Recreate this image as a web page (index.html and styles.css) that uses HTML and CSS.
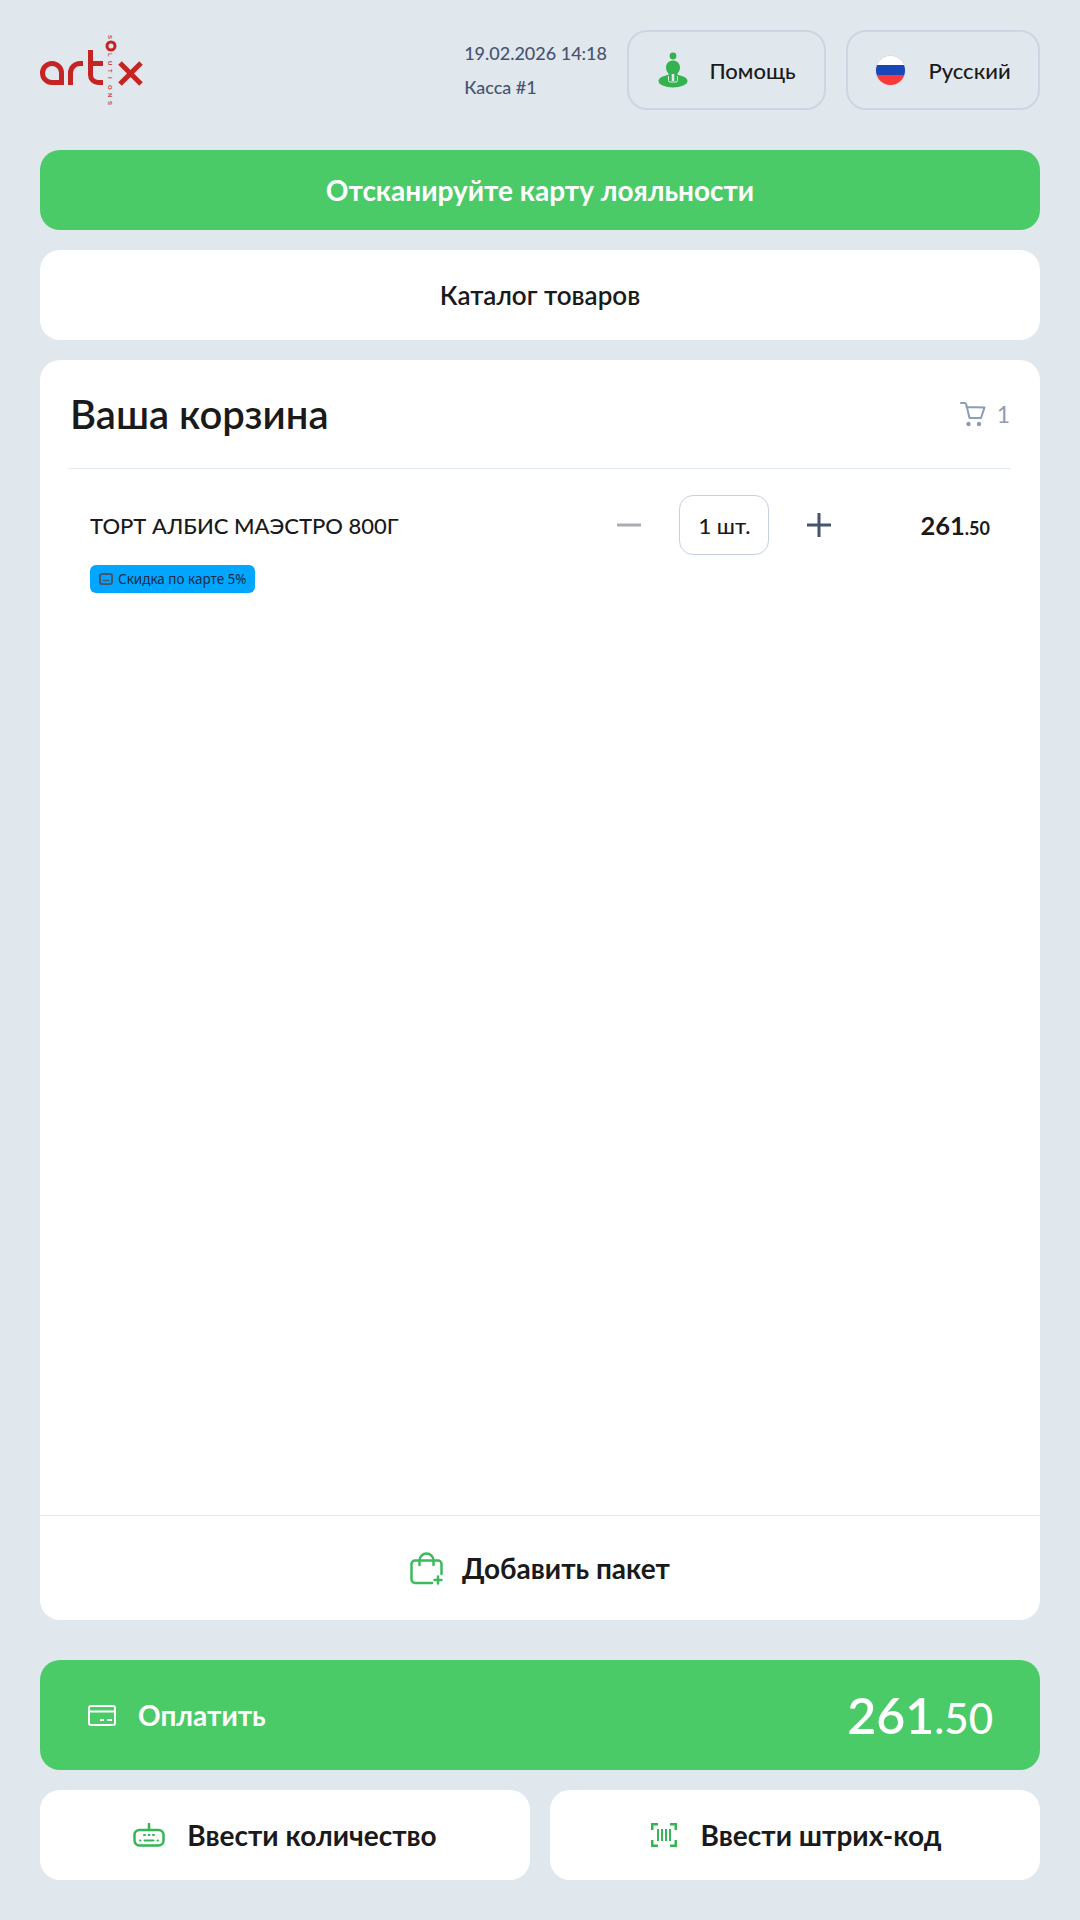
FILE: index.html
```html
<!DOCTYPE html>
<html lang="ru">
<head>
    <meta charset="UTF-8">
    <meta name="viewport" content="width=device-width, initial-scale=1.0">
    <title>Касса</title>
    <link rel="stylesheet" href="styles.css">
</head>
<body>
    <div class="page">
        <header class="header">
            <svg class="logo" viewBox="0 0 104 72" fill="none" stroke="#c42424" stroke-width="5">
                <path d="M21.5 47.5H12A9.5 9.5 0 0 1 12 28.5A9.5 9.5 0 0 1 21.5 38V50"/>
                <path d="M30.5 50V38A9.5 9.5 0 0 1 40 28.5H43"/>
                <path d="M50.5 15V40A7.500 7.500 0 0 0 58 47.500H63M50.500 28.500H63"/>
                <path d="M80 28L101 49M101 28L80 49"/>
                <circle cx="71" cy="11" r="4" stroke-width="3"/>
                <g class="logo-text">
                    <text transform="translate(68 0) rotate(90)">S</text>
                    <text transform="translate(68 18) rotate(90)" x="0 8 16 24 32 40 48">LUTIONS</text>
                </g>
            </svg>
            <div class="info">
                <div>19.02.2026 14:18</div>
                <div>Касса #1</div>
            </div>
            <button class="head-btn help-btn">
                <svg class="head-icon" viewBox="0 0 32 36">
                    <circle cx="16" cy="4" r="3.400" fill="#34b24f"/>
                    <ellipse cx="16" cy="29" rx="14.500" ry="6.500" fill="#34b24f"/>
                    <path d="M16 8.500c-4 0-7 3-7 7 0 2.500 1 4.500 2.500 6V30h9V21.500c1.500-1.500 2.500-3.500 2.500-6 0-4-3-7-7-7z" fill="#34b24f"/>
                    <path d="M14.700 22v7h2.600v-7z" fill="#e0e7ed"/>
                    <path d="M11.500 24v4.500a1.500 1.500 0 0 0 1.500 1.500h6a1.500 1.500 0 0 0 1.500-1.500V24" fill="none" stroke="#e0e7ed" stroke-width="1"/>
                </svg>
                <span>Помощь</span>
            </button>
            <button class="head-btn lang-btn">
                <span class="flag"><i class="flag-white"></i><i class="flag-blue"></i><i class="flag-red"></i></span>
                <span>Русский</span>
            </button>
        </header>

        <div class="scan-card">Отсканируйте карту лояльности</div>
        <div class="catalog-card">Каталог товаров</div>

        <section class="cart">
            <div class="cart-head">
                <h1>Ваша корзина</h1>
                <div class="cart-count">
                    <svg class="cart-icon" viewBox="0 0 26 25" fill="none" stroke="#8d9cb8" stroke-width="2" stroke-linecap="round" stroke-linejoin="round">
                        <path d="M1 1h3.500c1 0 1.500.5 1.800 1.500L9.500 16h11.500l3.500-10.500-18-.5"/>
                        <circle cx="8.500" cy="22" r="1.200" fill="#8d9cb8"/>
                        <circle cx="19" cy="22" r="1.200" fill="#8d9cb8"/>
                    </svg>
                    <span>1</span>
                </div>
            </div>
            <div class="cart-items">
                <div class="item">
                    <div class="item-row">
                        <div class="item-name">ТОРТ АЛБИС МАЭСТРО 800Г</div>
                        <div class="qty">
                            <svg class="qty-btn" viewBox="0 0 24 24"><path d="M0 12h24" stroke="#a9adb3" stroke-width="3"/></svg>
                            <div class="qty-box">1 шт.</div>
                            <svg class="qty-btn" viewBox="0 0 24 24"><path d="M0 12h24M12 0v24" stroke="#47546f" stroke-width="3"/></svg>
                        </div>
                        <div class="item-price">261<small>.50</small></div>
                    </div>
                    <div class="tag">
                        <svg class="tag-icon" viewBox="0 0 14 12" fill="none" stroke="#47546f">
                            <rect x="1" y="1" width="12" height="10" rx="2" stroke-width="2"/>
                            <path d="M3.500 7.500h7" stroke-width="1.500"/>
                        </svg>
                        <span>Скидка по карте 5%</span>
                    </div>
                </div>
            </div>
            <div class="cart-foot">
                <svg class="bag-icon" viewBox="0 0 33 33" fill="none" stroke="#3cba5c" stroke-width="2.500" stroke-linecap="round" stroke-linejoin="round">
                    <path d="M22 31H5a3.500 3.500 0 0 1-3.500-3.500V12A3.500 3.500 0 0 1 5 8.500h23a3.500 3.500 0 0 1 3.500 3.500v10"/>
                    <path d="M9.500 13V8.500a7 7 0 0 1 14 0V13"/>
                    <path d="M28 24.500v7M24.500 28h7"/>
                </svg>
                <span>Добавить пакет</span>
            </div>
        </section>

        <div class="pay-btn">
            <div class="pay-label">
                <svg class="pay-icon" viewBox="0 0 28 21" fill="none" stroke="#fff" stroke-width="2">
                    <rect x="1" y="1" width="26" height="19" rx="2"/>
                    <path d="M1 6.500h26M12 15h4M19 15h5"/>
                </svg>
                <span>Оплатить</span>
            </div>
            <div class="pay-sum">261<small>.50</small></div>
        </div>

        <div class="bottom-row">
            <div class="bottom-btn">
                <svg class="keys-icon" viewBox="0 0 32 24" fill="none" stroke="#34b654" stroke-width="2.500" stroke-linecap="round">
                    <rect x="1.500" y="7" width="29" height="15.500" rx="5"/>
                    <path d="M16 1v6" stroke-width="2.500"/>
                    <path d="M11 12h1M15.500 12h1M20 12h1M7 17.500h.5M11.500 17.500h9M24.500 17.500h.5" stroke-width="2"/>
                </svg>
                <span>Ввести количество</span>
            </div>
            <div class="bottom-btn">
                <svg class="code-icon" viewBox="0 0 26 24" fill="none" stroke="#34b654" stroke-width="2.500">
                    <path d="M7 1.250H1.250V7M19 1.250h5.750V7M7 22.750H1.250V17M19 22.750h5.750V17"/>
                    <path d="M7 6v12M11 6v12M15 6v12M19 6v12" stroke-width="2"/>
                </svg>
                <span>Ввести штрих-код</span>
            </div>
        </div>
    </div>
</body>
</html>
```

FILE: styles.css
```css
* {
    box-sizing: border-box;
}

body {
    font-family: Lato, "Noto Sans", sans-serif;
    background-color: #e0e7ed;
    color: #1a1a1a;
    margin: 0;
    padding: 0;
}

.page {
    display: flex;
    flex-direction: column;
    height: 1920px;
    padding: 30px 40px 40px;
}

.header {
    display: flex;
    align-items: center;
    height: 80px;
    margin-bottom: 40px;
}

.logo {
    width: 104px;
    height: 72px;
    margin-right: auto;
    align-self: flex-start;
    margin-top: 5px;
}

.logo-text {
    font-family: "Liberation Sans", sans-serif;
    font-size: 6px;
    font-weight: 700;
    fill: #c9474d;
    stroke: none;
}

.info {
    display: flex;
    flex-direction: column;
    gap: 12px;
    font-size: 18px;
    font-weight: 500;
    color: #47546f;
    margin-right: 20px;
}

.head-btn {
    display: flex;
    align-items: center;
    justify-content: center;
    height: 80px;
    background: none;
    border: 2px solid #ccd6e2;
    border-radius: 20px;
    font-family: inherit;
    font-size: 22px;
    font-weight: 500;
    color: #1a1a1a;
}

.help-btn {
    width: 199px;
    gap: 20px;
    margin-right: 20px;
}

.lang-btn {
    width: 194px;
    gap: 22px;
}

.head-icon {
    width: 32px;
    height: 36px;
}

.flag {
    display: flex;
    flex-direction: column;
    width: 31px;
    height: 31px;
    border-radius: 50%;
    overflow: hidden;
    border: 1px solid #d5dce6;
}

.flag i {
    flex: 1;
}

.flag-white {
    background-color: #ffffff;
}

.flag-blue {
    background-color: #1a47b8;
}

.flag-red {
    background-color: #f93939;
}

.scan-card {
    display: flex;
    align-items: center;
    justify-content: center;
    height: 80px;
    margin-bottom: 20px;
    background-color: #4bcb68;
    border-radius: 20px;
    color: #ffffff;
    font-size: 28px;
    font-weight: 700;
}

.catalog-card {
    display: flex;
    align-items: center;
    justify-content: center;
    height: 90px;
    margin-bottom: 20px;
    background-color: #ffffff;
    border-radius: 20px;
    font-size: 26px;
    font-weight: 600;
}

.cart {
    display: flex;
    flex-direction: column;
    height: 1260px;
    background-color: #ffffff;
    border-radius: 20px;
}

.cart-head {
    display: flex;
    align-items: center;
    justify-content: space-between;
    height: 109px;
    margin: 0 30px 0 28px;
    padding-left: 2px;
    border-bottom: 1px solid #e1e8ef;
}

.cart-head h1 {
    margin: 0;
    font-size: 40px;
    font-weight: 600;
}

.cart-count {
    display: flex;
    align-items: center;
    gap: 11px;
    font-size: 23px;
    color: #8d9cb8;
}

.cart-icon {
    width: 26px;
    height: 25px;
}

.cart-items {
    flex: 1;
    padding: 26px 50px;
}

.item-row {
    display: flex;
    align-items: center;
    height: 60px;
}

.item-name {
    flex: 1;
    font-size: 22px;
    font-weight: 500;
}

.qty {
    display: flex;
    align-items: center;
    gap: 38px;
    margin-right: 89px;
}

.qty-btn {
    width: 24px;
    height: 24px;
}

.qty-box {
    display: flex;
    align-items: center;
    justify-content: center;
    width: 90px;
    height: 60px;
    border: 1px solid #c3d0e0;
    border-radius: 14px;
    font-size: 22px;
    font-weight: 500;
}

.item-price {
    font-size: 25.500px;
    font-weight: 700;
}

.item-price small {
    font-size: 18px;
    font-weight: 700;
}

.tag {
    display: inline-flex;
    align-items: center;
    gap: 5px;
    height: 28px;
    margin-top: 10px;
    padding: 0 8px 0 9px;
    background-color: #00a6ff;
    border-radius: 6px;
    font-family: "Noto Sans", sans-serif;
    font-size: 13.500px;
    color: #1f2a44;
}

.tag-icon {
    width: 14px;
    height: 12px;
}

.cart-foot {
    display: flex;
    align-items: center;
    justify-content: center;
    gap: 19px;
    height: 105px;
    border-top: 1px solid #e1e8ef;
    font-size: 28px;
    font-weight: 700;
}

.bag-icon {
    width: 33px;
    height: 33px;
}

.pay-btn {
    display: flex;
    align-items: center;
    justify-content: space-between;
    height: 110px;
    margin-top: 40px;
    padding: 0 47px 0 48px;
    background-color: #4bcb68;
    border-radius: 20px;
    color: #ffffff;
}

.pay-label {
    display: flex;
    align-items: center;
    gap: 22px;
    font-size: 28px;
    font-weight: 700;
}

.pay-icon {
    width: 28px;
    height: 21px;
}

.pay-sum {
    font-size: 50px;
    font-weight: 600;
}

.pay-sum small {
    font-size: 42px;
    font-weight: 500;
}

.bottom-row {
    display: flex;
    gap: 20px;
    margin-top: 20px;
}

.bottom-btn {
    display: flex;
    flex: 1;
    align-items: center;
    justify-content: center;
    gap: 22px;
    height: 90px;
    background-color: #ffffff;
    border-radius: 20px;
    font-size: 28px;
    font-weight: 700;
}

.keys-icon {
    width: 32px;
    height: 24px;
}

.code-icon {
    width: 26px;
    height: 24px;
    margin: 0 2px;
}
```
